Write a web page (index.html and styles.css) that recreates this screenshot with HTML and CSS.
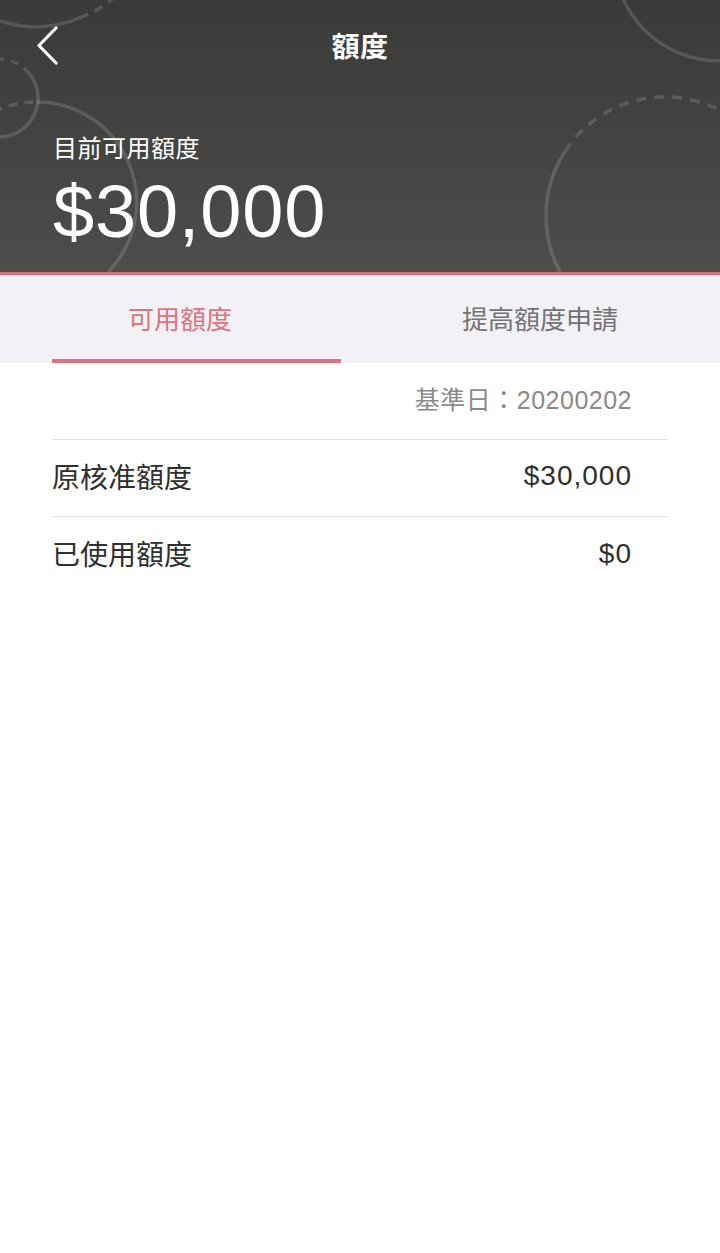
FILE: index.html
```html
<!DOCTYPE html>
<html lang="zh-Hant">
<head>
<meta charset="utf-8">
<title>額度</title>
<link rel="stylesheet" href="styles.css">
</head>
<body>
<div class="page">
  <header class="hero">
    <svg class="hero-deco" viewBox="0 0 720 272" width="720" height="272" aria-hidden="true">
      <g fill="none" stroke="rgba(255,255,255,0.14)" stroke-width="3.5">
        <!-- top-left circle -->
        <path d="M -30 5 A 110 110 0 0 0 80 17.7"/>
        <path d="M 80 17.7 A 110 110 0 0 0 118 -6" stroke-dasharray="9 7"/>
        <!-- small left circle -->
        <path d="M -4 59 A 39 39 0 0 1 27 71" stroke-dasharray="8 7"/>
        <path d="M 27 71 A 39 39 0 0 1 -4 137"/>
        <!-- big left circle -->
        <path d="M -20 120 A 100 100 0 0 1 37 102" stroke-dasharray="9 7"/>
        <path d="M 37 102 A 100 100 0 0 1 110 270 L 108 274"/>
        <!-- top-right circle -->
        <path d="M 622 -4 A 104 104 0 0 0 760 52"/>
        <!-- big right circle -->
        <path d="M 565 151.5 A 119 119 0 0 1 760 144" stroke-dasharray="10 8"/>
        <path d="M 565 151.5 A 119 119 0 0 0 572 290"/>
      </g>
    </svg>
    <div class="nav">
      <button class="back" aria-label="返回">
        <svg width="24" height="40" viewBox="0 0 24 40"><path d="M20 3 L3 20.5 L20 38" fill="none" stroke="#fff" stroke-width="3.2" stroke-linecap="round" stroke-linejoin="round"/></svg>
      </button>
      <h1 class="title">額度</h1>
    </div>
    <div class="summary">
      <div class="summary-label">目前可用額度</div>
      <div class="summary-amount">$30,000</div>
    </div>
  </header>

  <nav class="tabs">
    <div class="tab active">
      <span class="tab-text">可用額度</span>
      <span class="tab-bar"></span>
    </div>
    <div class="tab">
      <span class="tab-text">提高額度申請</span>
    </div>
  </nav>

  <section class="content">
    <div class="row date-row">
      <span class="date">基準日：20200202</span>
    </div>
    <div class="row">
      <span class="row-label">原核准額度</span>
      <span class="row-value">$30,000</span>
    </div>
    <div class="row">
      <span class="row-label">已使用額度</span>
      <span class="row-value">$0</span>
    </div>
  </section>
</div>
</body>
</html>
```

FILE: styles.css
```css
* { box-sizing: border-box; }
html, body { margin: 0; padding: 0; background: #fff; }
body {
  font-family: "Noto Sans CJK TC", "Noto Sans", sans-serif;
  width: 720px;
  min-height: 1253px;
}
.page { width: 720px; }

.hero {
  position: relative;
  height: 275px;
  overflow: hidden;
  background: linear-gradient(180deg, #3a3b39 0%, #434442 50%, #4d4e4c 100%);
  border-bottom: 3px solid #d7707f;
  color: #fff;
}
.hero-deco {
  position: absolute;
  left: 0;
  top: 0;
  pointer-events: none;
}
.nav {
  position: relative;
  height: 90px;
  display: flex;
  align-items: center;
  justify-content: center;
}
.back {
  position: absolute;
  left: 36px;
  top: 25px;
  padding: 0;
  margin: 0;
  border: 0;
  background: none;
  display: flex;
}
.title {
  margin: 0;
  font-size: 28px;
  font-weight: 700;
  line-height: 40px;
  letter-spacing: 0.5px;
}
.summary {
  position: relative;
  padding: 40px 0 0 53px;
}
.summary-label {
  font-size: 24px;
  line-height: 34px;
  font-weight: 400;
  letter-spacing: 0.5px;
}
.summary-amount {
  font-family: "Liberation Sans", Arial, sans-serif;
  font-size: 74px;
  line-height: 80px;
  margin-top: 8px;
  letter-spacing: 0.8px;
}

.tabs {
  display: flex;
  height: 88px;
  background: #f2f2f6;
}
.tab {
  position: relative;
  flex: 1;
  display: flex;
  align-items: center;
  justify-content: center;
  font-size: 26px;
  color: #737373;
}
.tab.active { color: #e0717f; }
.tab-text { line-height: 36px; margin-top: -2px; }
.tab-bar {
  position: absolute;
  left: 52px;
  bottom: 0;
  width: 289px;
  height: 4px;
  background: #dc7384;
}

.content {
  padding: 0 52px;
}
.row {
  height: 77px;
  display: flex;
  align-items: center;
  justify-content: space-between;
  padding-right: 36px;
  border-bottom: 1px solid #e3e3e3;
}
.row:last-child { border-bottom: 0; }
.date-row {
  justify-content: flex-end;
  height: 77px;
}
.date {
  font-family: "Liberation Sans", "Noto Sans CJK TC", sans-serif;
  font-size: 25px;
  color: #8a8a8a;
  line-height: 34px;
  margin-top: -2px;
  letter-spacing: 0.5px;
}
.row-label {
  font-size: 28px;
  color: #2f2f2f;
  line-height: 40px;
  margin-top: -5px;
}
.row-value {
  font-family: "Liberation Sans", "Noto Sans CJK TC", sans-serif;
  font-size: 28px;
  color: #2f2f2f;
  line-height: 40px;
  letter-spacing: 1px;
  margin-top: -4px;
}
```
